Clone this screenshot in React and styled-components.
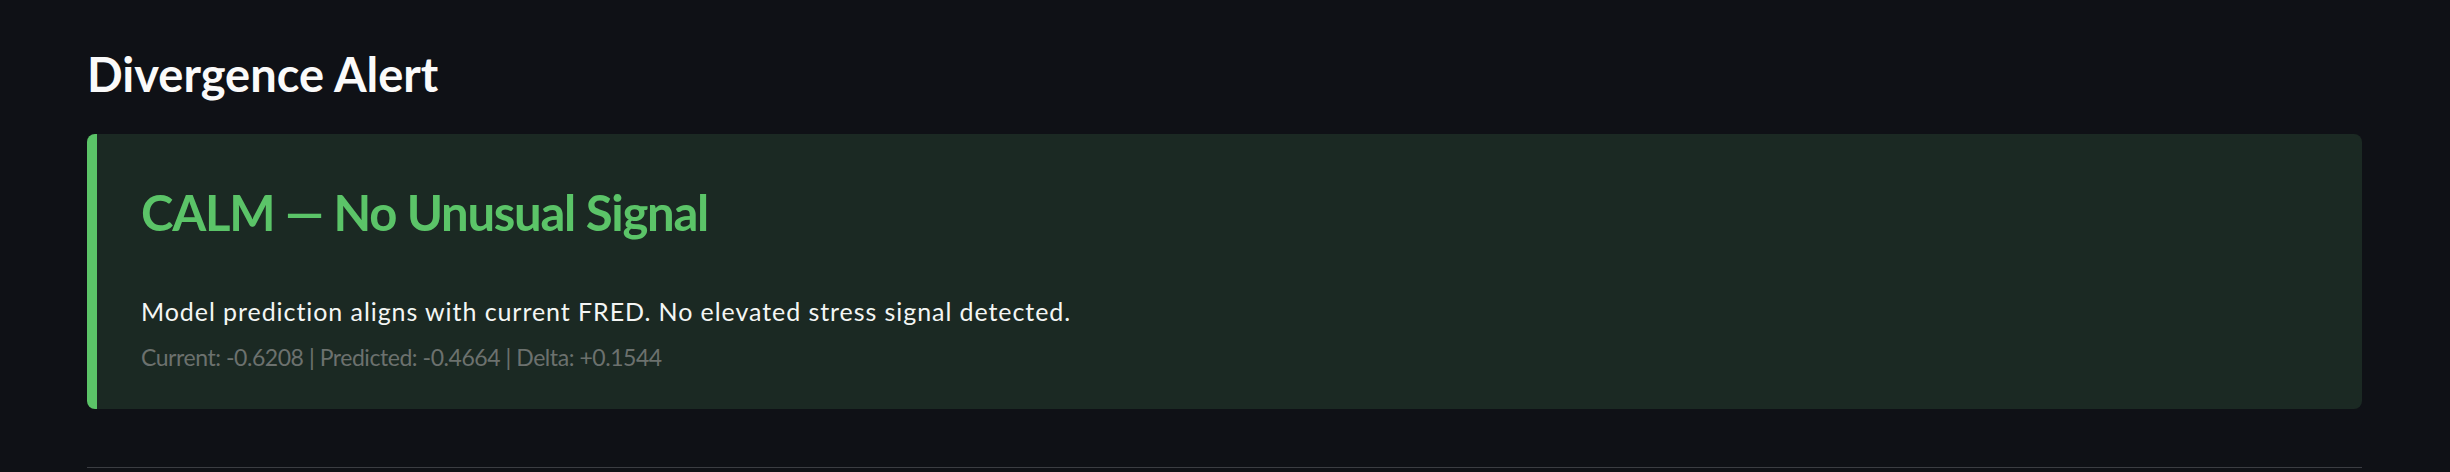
import React from 'react';
import styled, { createGlobalStyle } from 'styled-components';

const GlobalStyle = createGlobalStyle`
  html, body {
    margin: 0;
    padding: 0;
    background: #0f1116;
  }
  body {
    font-family: Lato, "Noto Sans", sans-serif;
    -webkit-font-smoothing: antialiased;
  }
`;

const alert = {
  level: 'CALM',
  label: 'No Unusual Signal',
  message: 'Model prediction aligns with current FRED. No elevated stress signal detected.',
  current: -0.6208,
  predicted: -0.4664,
};

const fmt = (n, signed) => (signed && n >= 0 ? '+' : '') + n.toFixed(4);

const App = () => {
  const delta = alert.current - alert.predicted < 0 ? alert.predicted - alert.current : alert.current - alert.predicted;
  return (
    <>
      <GlobalStyle />
      <Page>
        <Heading>Divergence Alert</Heading>
        <AlertCard tone="#5bc468">
          <AlertTitle tone="#5bc468">
            {alert.level} — {alert.label}
          </AlertTitle>
          <AlertText>{alert.message}</AlertText>
          <AlertMeta>
            Current: {fmt(alert.current)} | Predicted: {fmt(alert.predicted)} | Delta: {fmt(delta, true)}
          </AlertMeta>
        </AlertCard>
        <Divider />
      </Page>
    </>
  );
};

export default App;

const Page = styled.div`
  display: flex;
  flex-direction: column;
  padding: 46px 88px 0 87px;
  height: 472px;
  box-sizing: border-box;
`;

const Heading = styled.h2`
  margin: 0 0 32px;
  font-size: 47px;
  line-height: 1.2;
  font-weight: 700;
  color: #fafafa;
`;

const AlertCard = styled.div`
  display: flex;
  flex-direction: column;
  background: #1b2923;
  border-left: 10px solid ${(p) => p.tone};
  border-radius: 8px;
  padding: 49px 44px 37px;
`;

const AlertTitle = styled.h3`
  margin: 0 0 54px;
  font-size: 49px;
  line-height: 1.2;
  font-weight: 700;
  letter-spacing: -1.25px;
  color: ${(p) => p.tone};
`;

const AlertText = styled.p`
  margin: 0 0 18px;
  font-size: 25px;
  line-height: 1.2;
  letter-spacing: 0.93px;
  color: #f4f6f4;
`;

const AlertMeta = styled.p`
  margin: 0;
  font-size: 23px;
  line-height: 1.2;
  letter-spacing: -0.45px;
  color: #6c716e;
`;

const Divider = styled.hr`
  margin: 58px 0 0;
  border: 0;
  border-top: 1px solid #3b3d42;
`;
